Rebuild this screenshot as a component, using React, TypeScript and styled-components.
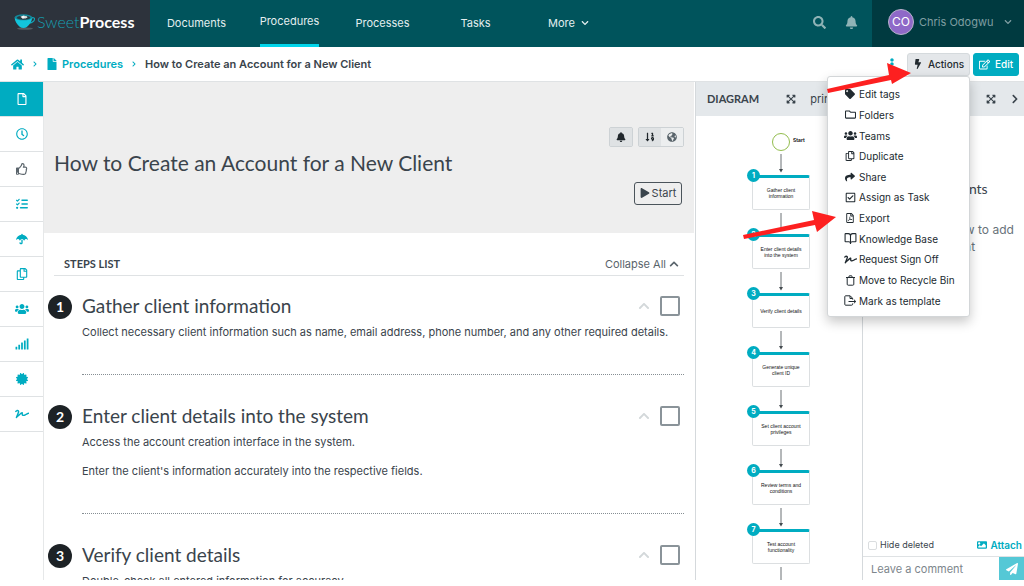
import React from "react";
import styled, { createGlobalStyle, css } from "styled-components";
import {
  FaHome, FaFile, FaRegFile, FaRegClock, FaRegThumbsUp, FaUmbrella, FaUsers, FaSignal, FaCertificate,
  FaSignature, FaTag, FaRegFolder, FaShare, FaRegCheckSquare, FaRegFilePdf, FaSearch, FaBell, FaBolt,
  FaRegEdit, FaExpandArrowsAlt, FaGlobeAmericas, FaSortNumericDown, FaPlay, FaPaperPlane, FaImage,
  FaChevronDown, FaChevronUp, FaChevronRight, FaEllipsisV, FaRegCopy,
} from "react-icons/fa";
import { FaListCheck } from "react-icons/fa6";
import { BookOpen } from "lucide-react";

const teal = "#00acc1";
const ink = "#3a444c";
const line = "#dfe2e4";
const sans = `Inter, "Liberation Sans", sans-serif`;
const display = `Lato, "Liberation Sans", sans-serif`;

const Global = createGlobalStyle`
  * { box-sizing: border-box; }
  body { margin: 0; background: #fff; color: ${ink}; font: 11px/16px ${sans}; overflow: hidden; }
  button, input { font: inherit; color: inherit; }
  button { cursor: pointer; padding: 0; border: 0; background: none; }
  a { color: inherit; text-decoration: none; }
  h1, h2, h3, p, ol, ul { margin: 0; padding: 0; font-weight: 400; }
  ol, ul { list-style: none; }
  svg { flex: none; display: block; }
`;

const Page = styled.div`
  display: flex;
  flex-direction: column;
  height: 100vh;
  padding-bottom: 6px;
`;

const TopBar = styled.header`
  display: flex;
  flex: none;
  height: 47px;
  background: #00545c;
  color: #e3eeef;
`;
const Brand = styled.a`
  display: flex;
  align-items: center;
  width: 150px;
  padding: 0 0 3px 14px;
  gap: 1px;
  background: #2d333c;
  font: 300 16px/20px ${display};
  color: #169fb1;
  b { font-weight: 700; color: #fff; }
`;
const Nav = styled.nav`
  display: flex;
  flex: 1;
`;
const NavLink = styled.a<{ $active?: boolean }>`
  display: flex;
  justify-content: center;
  width: 93px;
  span {
    display: flex;
    align-items: center;
    gap: 6px;
    padding-bottom: 2px;
    ${(p) => p.$active && css`border-bottom: 3px solid #00d5ea;`}
  }
`;
const TopTools = styled.div`
  display: flex;
  align-items: center;
  gap: 19px;
  padding: 0 14px 2px 0;
  color: #8fb3b6;
`;
const UserMenu = styled.button`
  display: flex;
  align-items: center;
  width: 152px;
  padding: 0 12px 3px 16px;
  background: #003a40;
  color: #7f9ea2;
  svg { margin-left: auto; }
`;
const Avatar = styled.span`
  width: 26px;
  height: 26px;
  margin-right: 5px;
  border: 1px solid #b9b3cc;
  border-radius: 50%;
  background: #8f69c8;
  color: #fff;
  font-size: 12px;
  line-height: 24px;
`;

const CrumbBar = styled.div`
  display: flex;
  flex: none;
  align-items: center;
  height: 35px;
  padding: 0 5px 0 11px;
  border-bottom: 1px solid ${line};
  font-weight: 600;
`;
const Crumb = styled.a`
  display: flex;
  align-items: center;
  gap: 4px;
  color: ${teal};
`;
const CrumbArrow = styled.span`
  width: 22px;
  display: flex;
  justify-content: center;
  color: ${teal};
`;
const CrumbTools = styled.div`
  position: relative;
  display: flex;
  align-items: center;
  gap: 3px;
  margin-left: auto;
`;
const KebabButton = styled.button`
  width: 24px;
  height: 24px;
  display: grid;
  place-items: center;
  color: ${teal};
`;
const ToolButton = styled.button<{ $primary?: boolean }>`
  display: flex;
  align-items: center;
  justify-content: center;
  gap: 5px;
  width: ${(p) => (p.$primary ? "46px" : "63px")};
  height: 23px;
  border: 1px solid ${(p) => (p.$primary ? teal : "#d5dadd")};
  border-radius: 3px;
  background: ${(p) => (p.$primary ? teal : "#e4e7ea")};
  color: ${(p) => (p.$primary ? "#fff" : "#222a30")};
  font-size: 10px;
  font-weight: 500;
`;

const Menu = styled.div`
  position: absolute;
  z-index: 2;
  top: 24px;
  right: 49px;
  display: grid;
  grid-auto-rows: 1fr;
  width: 143px;
  height: 241px;
  padding: 7px 0 5px;
  border: 1px solid #d3d6d8;
  border-radius: 3px;
  background: #fff;
  box-shadow: 0 5px 12px rgba(0, 0, 0, 0.22);
`;
const MenuItem = styled.button`
  display: flex;
  align-items: center;
  gap: 1px;
  padding-left: 14px;
  color: #212a30;
  font-size: 10px;
  font-weight: 400;
  white-space: nowrap;
`;
const MenuIcon = styled.span`
  display: flex;
  justify-content: center;
  width: 16px;
`;
const Pointer = styled.svg<{ $top: number; $right: number }>`
  position: absolute;
  z-index: 3;
  top: ${(p) => p.$top}px;
  right: ${(p) => p.$right}px;
  pointer-events: none;
`;

const Body = styled.div`
  display: flex;
  flex: 1;
  min-height: 0;
`;
const Rail = styled.nav`
  flex: none;
  width: 44px;
  border-right: 1px solid #e6e8e9;
`;
const RailLink = styled.a<{ $active?: boolean; $muted?: boolean }>`
  display: grid;
  place-items: center;
  height: 35px;
  border-bottom: 1px solid ${line};
  background: ${(p) => (p.$active ? teal : "#fff")};
  color: ${(p) => (p.$active ? "#fff" : p.$muted ? "#5b656c" : teal)};
`;

const Main = styled.main`
  flex: 1;
  min-width: 0;
  overflow: hidden;
`;
const Hero = styled.section`
  display: flex;
  align-items: center;
  justify-content: space-between;
  height: 151px;
  margin-right: 1px;
  padding: 10px 10px 0 10px;
  background: #eee;
  h1 { font: 400 21px/28px ${display}; white-space: nowrap; }
`;
const HeroTools = styled.div`
  display: flex;
  flex-direction: column;
  align-items: flex-end;
  gap: 35px;
  margin-top: 6px;
`;
const IconRow = styled.div`
  display: flex;
  gap: 5px;
`;
const IconGroup = styled.div`
  display: flex;
  border: 1px solid #cdd2d5;
  border-radius: 2px;
`;
const IconButton = styled.button<{ $on?: boolean }>`
  display: grid;
  place-items: center;
  width: 22px;
  height: 18px;
  background: ${(p) => (p.$on ? "#dfe2e4" : "#eceeef")};
  color: ${(p) => (p.$on ? "#20272c" : "#59646b")};
`;
const StartButton = styled.button`
  display: flex;
  align-items: center;
  justify-content: center;
  gap: 2px;
  width: 48px;
  height: 23px;
  margin-right: 2px;
  border: 1px solid #4b545b;
  border-radius: 3px;
`;

const StepsHead = styled.div`
  display: flex;
  justify-content: space-between;
  align-items: flex-end;
  height: 43px;
  margin: 0 11px 0 10px;
  padding: 0 5px 3px 10px;
  border-bottom: 1px solid ${line};
  h2 { font: 700 11px/16px ${display}; }
  button { display: flex; align-items: center; gap: 3px; color: #59646b; }
`;
const Step = styled.li`
  display: flex;
  gap: 10px;
  padding: 26px 11px 0 4px;
  &:first-child { padding-top: 15px; }
`;
const StepNumber = styled.span`
  flex: none;
  width: 24px;
  height: 24px;
  margin-top: 4px;
  border-radius: 50%;
  background: #1d2226;
  color: #fff;
  font: 700 14px/24px ${display};
  text-align: center;
`;
const StepBody = styled.div`
  flex: 1;
  min-width: 0;
  padding-bottom: 33px;
  border-bottom: 1px dotted #868e93;
  p { margin-bottom: 12px; line-height: 17px; }
  p:last-child { margin-bottom: 0; }
`;
const StepTop = styled.div`
  display: flex;
  align-items: center;
  gap: 10px;
  margin-bottom: 3px;
  padding-right: 4px;
  color: #d3d8da;
  h3 { flex: 1; color: ${ink}; font: 400 19px/30px ${display}; white-space: nowrap; }
  input {
    appearance: none;
    width: 20px;
    height: 20px;
    margin: 0;
    border: 2px solid #8a9399;
    border-radius: 2px;
    background: #fff;
  }
`;

const Panel = styled.aside<{ $width: number }>`
  display: flex;
  flex: none;
  flex-direction: column;
  width: ${(p) => p.$width}px;
  border-left: 1px solid #d5d9dc;
  overflow: hidden;
`;
const PanelHead = styled.div`
  display: flex;
  flex: none;
  align-items: center;
  justify-content: space-between;
  height: 34px;
  padding: 0 4px 0 11px;
  background: #e4e8eb;
  h2 { font: 700 11px/16px ${display}; }
`;
const PanelTools = styled.div`
  display: flex;
  align-items: center;
  gap: 14px;
  margin-left: auto;
  button { display: flex; }
`;
const Flow = styled.ol`
  display: flex;
  flex: 1;
  flex-direction: column;
  align-items: center;
  min-height: 0;
  padding: 17px 0 0 4px;
  overflow: hidden;
  li { display: flex; flex: none; flex-direction: column; align-items: center; }
`;
const StartNode = styled.div`
  position: relative;
  width: 18px;
  height: 18px;
  border: 1px solid #93bd4e;
  border-radius: 50%;
  color: #000;
  font: 600 5px/6px ${sans};
  span { position: absolute; left: 20px; top: 3px; }
`;
const FlowNode = styled.div`
  position: relative;
  display: grid;
  place-items: center;
  width: 58px;
  height: 35px;
  padding: 0 2px 2px;
  border: 1px solid #dcdfe1;
  border-top: 3px solid ${teal};
  border-radius: 2px;
  background: #fff;
  color: #111;
  font: 5px/6px "Liberation Sans", sans-serif;
  text-align: center;
  white-space: pre-line;
`;
const FlowNumber = styled.b`
  position: absolute;
  top: -9px;
  left: -6px;
  width: 13px;
  height: 13px;
  border-radius: 50%;
  background: ${teal};
  color: #fff;
  font: 700 7px/13px ${sans};
`;
const Empty = styled.div`
  flex: 1;
  padding-top: 63px;
  text-align: center;
  color: #68727a;
  font-size: 12px;
  line-height: 17px;
  h3 { margin-bottom: 22px; color: ${ink}; font: 400 14px/20px ${display}; }
  p { padding: 0 10px; }
`;
const CommentTools = styled.div`
  display: flex;
  align-items: center;
  justify-content: space-between;
  height: 22px;
  padding: 0 2px 0 5px;
  font-size: 10px;
  label { display: flex; align-items: center; gap: 3px; font-size: 9px; }
  input { appearance: none; width: 9px; height: 9px; margin: 0; border: 1px solid #dadddf; border-radius: 2px; }
  button { display: flex; align-items: center; gap: 3px; color: ${teal}; font-weight: 600; }
`;
const CommentForm = styled.form`
  display: flex;
  height: 24px;
  border-top: 1px solid ${line};
  input { flex: 1; min-width: 0; padding: 0 8px; border: 0; background: #fff; }
  input::placeholder { color: #7d868c; opacity: 1; }
  button { display: grid; place-items: center; width: 25px; background: #55c8d6; color: #fff; }
`;

const CupLogo = () => (
  <svg width="22" height="18" viewBox="0 0 22 18" aria-hidden="true">
    <ellipse cx="11" cy="15.6" rx="8" ry="1.2" fill="#555b60" />
    <path d="M17.2 5.6c1.4-1.6 3.8-1 3.3.9-.6 2-2.6 3.2-5 3.6" fill="none" stroke="#15a4b8" strokeWidth="1.1" />
    <path d="M.6 4.5c.2 3.6 2.4 7.2 5.4 9.4 1.8 1.5 5 1.5 6.8 0 3-2.2 5.2-5.8 5.4-9.4z" fill="#12c5dc" />
    <ellipse cx="9.4" cy="4.3" rx="8.8" ry="3" fill="#12889a" />
    <ellipse cx="9.6" cy="4.7" rx="6.8" ry="2" fill="#2a3b42" />
    <path d="M6.5 3.8l3-1.2 2.2 1-.4 1.6-2.6.5z" fill="#f3f6f6" />
    <path d="M10 2.8l3 .4.4 1.6-2.4.8z" fill="#d3dddd" />
  </svg>
);
const TrashOutline = () => (
  <svg width="11" height="11" viewBox="0 0 11 11" fill="none" stroke="currentColor" aria-hidden="true">
    <path d="M1 2.5h9M3.7 2.3l.6-1.5h2.4l.6 1.5M2.2 2.7v6.5q0 1 1 1h4.6q1 0 1-1V2.7" />
  </svg>
);
const FileExit = () => (
  <svg width="13" height="11" viewBox="0 0 13 11" fill="none" stroke="currentColor" aria-hidden="true">
    <path d="M8.5 4.5V3.2L6.2.8H1.6q-.8 0-.8.8v7.8q0 .8.8.8h6.1q.8 0 .8-.8V8.5M6 1v2.5h2.5M4.5 6.5h7M9.8 4.6l2 1.900-2 1.900" />
  </svg>
);
const FlowArrow = () => (
  <svg width="6" height="24" viewBox="0 0 6 24" aria-hidden="true">
    <path d="M3 3v17" stroke="#6a7175" fill="none" />
    <path d="M1 18h4l-2 3.5z" fill="#444b50" />
  </svg>
);

const railIcons: [string, React.ReactNode][] = [
  ["Document", <FaRegFile size={12} />],
  ["History", <FaRegClock size={12} />],
  ["Approvals", <FaRegThumbsUp size={12} />],
  ["Tasks", <FaListCheck size={12} />],
  ["Policies", <FaUmbrella size={12} />],
  ["Copies", <FaRegCopy size={12} />],
  ["Teams", <FaUsers size={14} />],
  ["Reports", <FaSignal size={14} />],
  ["Badges", <FaCertificate size={12} />],
  ["Sign off", <FaSignature size={14} />],
];
const menuItems: [string, React.ReactNode][] = [
  ["Edit tags", <FaTag size={10} />],
  ["Folders", <FaRegFolder size={11} />],
  ["Teams", <FaUsers size={13} />],
  ["Duplicate", <FaRegCopy size={10} />],
  ["Share", <FaShare size={10} />],
  ["Assign as Task", <FaRegCheckSquare size={11} />],
  ["Export", <FaRegFilePdf size={10} />],
  ["Knowledge Base", <BookOpen size={13} />],
  ["Request Sign Off", <FaSignature size={13} />],
  ["Move to Recycle Bin", <TrashOutline />],
  ["Mark as template", <FileExit />],
];
const steps = [
  { title: "Gather client information", text: ["Collect necessary client information such as name, email address, phone number, and any other required details."] },
  { title: "Enter client details into the system", text: ["Access the account creation interface in the system.", "Enter the client's information accurately into the respective fields."] },
  { title: "Verify client details", text: ["Double-check all entered information for accuracy."] },
];
const nodes = [
  "Gather client\ninformation",
  "Enter client details\ninto the system",
  "Verify client details",
  "Generate unique\nclient ID",
  "Set client account\nprivileges",
  "Review terms and\nconditions",
  "Test account\nfunctionality",
];

export default function App() {
  return (
    <Page>
      <Global />
      <TopBar>
        <Brand href="#"><CupLogo /><span>Sweet<b>Process</b></span></Brand>
        <Nav>
          {["Documents", "Procedures", "Processes", "Tasks"].map((name) => (
            <NavLink href="#" key={name} $active={name === "Procedures"}><span>{name}</span></NavLink>
          ))}
          <NavLink href="#"><span>More <FaChevronDown size={8} /></span></NavLink>
        </Nav>
        <TopTools>
          <button aria-label="Search"><FaSearch size={13} /></button>
          <button aria-label="Notifications"><FaBell size={13} /></button>
        </TopTools>
        <UserMenu><Avatar>CO</Avatar>Chris Odogwu<FaChevronDown size={8} /></UserMenu>
      </TopBar>

      <CrumbBar>
        <Crumb href="#" aria-label="Home"><FaHome size={13} /></Crumb>
        <CrumbArrow><FaChevronRight size={6} /></CrumbArrow>
        <Crumb href="#"><FaFile size={12} />Procedures</Crumb>
        <CrumbArrow><FaChevronRight size={6} /></CrumbArrow>
        <span>How to Create an Account for a New Client</span>
        <CrumbTools>
          <KebabButton aria-label="More options"><FaEllipsisV size={12} /></KebabButton>
          <ToolButton><FaBolt size={10} />Actions</ToolButton>
          <ToolButton $primary><FaRegEdit size={11} />Edit</ToolButton>
          <Menu>
            {menuItems.map(([label, icon]) => (
              <MenuItem key={label}><MenuIcon>{icon}</MenuIcon>{label}</MenuItem>
            ))}
          </Menu>
          <Pointer $top={10} $right={107} width="86" height="32" viewBox="0 0 86 32" aria-hidden="true">
            <path d="M1 27L63 13L61 1L85 11L66 22L65 18L2 31z" fill="#fd2020" />
          </Pointer>
          <Pointer $top={158} $right={182} width="95" height="30" viewBox="0 0 95 30" aria-hidden="true">
            <path d="M1 25L72 10L70 1L94 7L75 22L73 15L2 29z" fill="#fd2020" />
          </Pointer>
        </CrumbTools>
      </CrumbBar>

      <Body>
        <Rail>
          {railIcons.map(([label, icon], i) => (
            <RailLink href="#" key={label} aria-label={label} $active={i === 0} $muted={i === 2}>{icon}</RailLink>
          ))}
        </Rail>
        <Main>
          <Hero>
            <h1>How to Create an Account for a New Client</h1>
            <HeroTools>
              <IconRow>
                <IconGroup><IconButton $on aria-label="Notify"><FaBell size={10} /></IconButton></IconGroup>
                <IconGroup>
                  <IconButton $on aria-label="Numbering"><FaSortNumericDown size={10} /></IconButton>
                  <IconButton aria-label="Public"><FaGlobeAmericas size={10} /></IconButton>
                </IconGroup>
              </IconRow>
              <StartButton><FaPlay size={10} />Start</StartButton>
            </HeroTools>
          </Hero>
          <StepsHead>
            <h2>STEPS LIST</h2>
            <button>Collapse All <FaChevronUp size={10} /></button>
          </StepsHead>
          <ol>
            {steps.map((s, i) => (
              <Step key={s.title}>
                <StepNumber>{i + 1}</StepNumber>
                <StepBody>
                  <StepTop>
                    <h3>{s.title}</h3>
                    <FaChevronUp size={12} />
                    <input type="checkbox" aria-label={s.title} />
                  </StepTop>
                  {s.text.map((t) => <p key={t}>{t}</p>)}
                </StepBody>
              </Step>
            ))}
          </ol>
        </Main>
        <Panel $width={167}>
          <PanelHead>
            <h2>DIAGRAM</h2>
            <PanelTools>
              <button aria-label="Expand diagram"><FaExpandArrowsAlt size={10} /></button>
              <button>print</button>
              <button aria-label="Close diagram"><FaChevronRight size={10} /></button>
            </PanelTools>
          </PanelHead>
          <Flow>
            <li><StartNode><span>Start</span></StartNode><FlowArrow /></li>
            {nodes.map((n, i) => (
              <li key={n}><FlowNode><FlowNumber>{i + 1}</FlowNumber>{n}</FlowNode><FlowArrow /></li>
            ))}
          </Flow>
        </Panel>
        <Panel $width={162}>
          <PanelHead>
            <PanelTools>
              <button aria-label="Expand comments"><FaExpandArrowsAlt size={10} /></button>
              <button aria-label="Close comments"><FaChevronRight size={10} /></button>
            </PanelTools>
          </PanelHead>
          <Empty>
            <h3>No Comments</h3>
            <p>Click to learn how to add a comment</p>
          </Empty>
          <CommentTools>
            <label><input type="checkbox" />Hide deleted</label>
            <button><FaImage size={10} />Attach</button>
          </CommentTools>
          <CommentForm>
            <input aria-label="Leave a comment" placeholder="Leave a comment" />
            <button type="button" aria-label="Send"><FaPaperPlane size={12} /></button>
          </CommentForm>
        </Panel>
      </Body>
    </Page>
  );
}
